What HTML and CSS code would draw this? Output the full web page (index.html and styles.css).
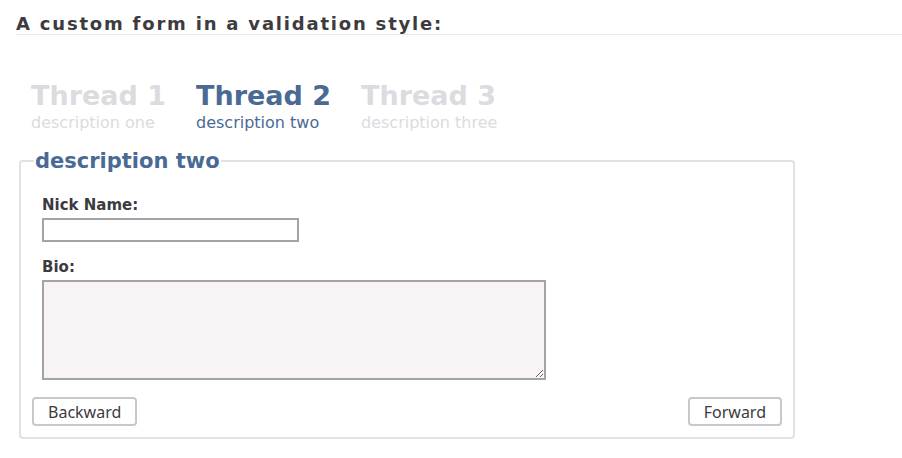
FILE: index.html
```html
<!DOCTYPE html>
<html>
<head>
<meta charset="utf-8">
<link rel="stylesheet" href="styles.css">
</head>
<body>
<h1 class="title">A custom form in a validation style:</h1>
<div class="steps">
  <div class="step">
    <div class="step-title">Thread 1</div>
    <div class="step-desc">description one</div>
  </div>
  <div class="step active">
    <div class="step-title">Thread 2</div>
    <div class="step-desc">description two</div>
  </div>
  <div class="step">
    <div class="step-title">Thread 3</div>
    <div class="step-desc">description three</div>
  </div>
</div>
<fieldset class="panel">
  <legend class="panel-legend">description two</legend>
  <label class="field-label">Nick Name:</label>
  <input class="field-input" type="text">
  <label class="field-label bio">Bio:</label>
  <textarea class="field-area"></textarea>
  <div class="actions">
    <button class="btn">Backward</button>
    <button class="btn">Forward</button>
  </div>
</fieldset>
</body>
</html>
```
FILE: styles.css
```css
html, body {
  margin: 0;
  padding: 0;
  background: #fff;
}
body {
  font-family: "DejaVu Sans", Verdana, sans-serif;
  color: #3d3a40;
  padding: 14px 0 0 16px;
}
.title {
  margin: 0;
  font-size: 18px;
  font-weight: bold;
  letter-spacing: 1.8px;
  line-height: 20px;
  border-bottom: 1px solid #e6eaf0;
}
.steps {
  display: flex;
  margin: 46px 0 0 15px;
}
.step {
  width: 165px;
}
.step-title {
  font-size: 27px;
  font-weight: bold;
  line-height: 30px;
  color: #dcdbdf;
}
.step-desc {
  font-size: 16px;
  line-height: 20px;
  margin-top: 2px;
  color: #dcdbdf;
}
.step.active .step-title,
.step.active .step-desc {
  color: #4a6a95;
}
.panel {
  margin: 16px 0 0 3px;
  width: 776px;
  box-sizing: border-box;
  border: 2px solid #e2e1e4;
  border-radius: 4px;
  padding: 23px 11px 11px 11px;
  display: flex;
  flex-direction: column;
  align-items: flex-start;
}
.panel-legend {
  font-size: 21px;
  font-weight: bold;
  color: #4a6a95;
  padding: 0 1px;
  margin-left: 2px;
}
.field-label {
  font-size: 15px;
  font-weight: bold;
  margin-left: 10px;
  line-height: 18px;
  margin-bottom: 4px;
}
.field-label.bio {
  margin-top: 16px;
}
.field-input {
  margin: 0 0 0 10px;
  width: 257px;
  height: 24px;
  box-sizing: border-box;
  border: 2px solid #a5a3a8;
  background: #fff;
  border-radius: 0;
}
.field-area {
  margin: 0 0 0 10px;
  width: 504px;
  height: 100px;
  box-sizing: border-box;
  border: 2px solid #a5a3a8;
  background: #f8f3f4;
  border-radius: 0;
  resize: both;
}
.actions {
  display: flex;
  justify-content: space-between;
  align-self: stretch;
  margin-top: 17px;
}
.btn {
  font-family: "Noto Sans", "Open Sans", sans-serif;
  font-size: 16px;
  color: #3d3a40;
  background: #fff;
  border: 2px solid #c8c7cc;
  border-radius: 4px;
  height: 29px;
  padding: 0 14px;
}
```
